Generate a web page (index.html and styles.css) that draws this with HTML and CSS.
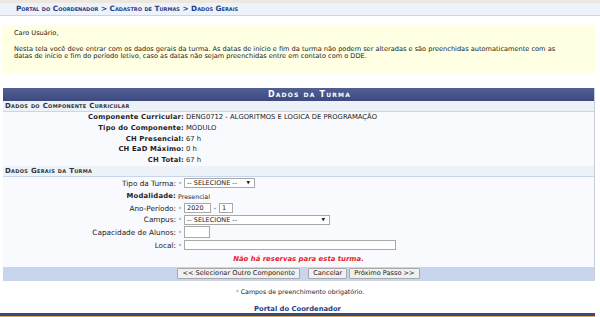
FILE: index.html
```html
<!DOCTYPE html>
<html lang="pt-BR">
<head>
  <meta charset="UTF-8">
  <title>Dados Gerais da Turma</title>
  <link rel="stylesheet" href="styles.css">
</head>
<body>

<div class="breadcrumb">Portal do Coordenador &gt; Cadastro de Turmas &gt; Dados Gerais</div>

<div class="info">
  <p>Caro Usuário,</p>
  <p>Nesta tela você deve entrar com os dados gerais da turma. As datas de início e fim da turma não podem ser alteradas e são preenchidas automaticamente com as datas de início e fim do período letivo, caso as datas não sejam preenchidas entre em contato com o DDE.</p>
</div>

<div class="formulario">
  <div class="caption">Dados da Turma</div>

  <div class="subtitle">Dados do Componente Curricular</div>
  <div class="rows">
    <div class="row"><span class="label bold">Componente Curricular:</span><span class="value">DENG0712 - ALGORITMOS E LOGICA DE PROGRAMAÇÃO</span></div>
    <div class="row"><span class="label bold">Tipo do Componente:</span><span class="value">MÓDULO</span></div>
    <div class="row"><span class="label bold">CH Presencial:</span><span class="value">67 h</span></div>
    <div class="row"><span class="label bold">CH EaD Máximo:</span><span class="value">0 h</span></div>
    <div class="row"><span class="label bold">CH Total:</span><span class="value">67 h</span></div>
  </div>

  <div class="subtitle">Dados Gerais da Turma</div>
  <div class="fields">
    <div class="field h13">
      <span class="label">Tipo da Turma:</span><span class="star">*</span>
      <span class="select w-tipo">-- SELECIONE --<i class="arrow">▼</i></span>
    </div>
    <div class="field h13">
      <span class="label bold">Modalidade:</span><span class="value">Presencial</span>
    </div>
    <div class="field h11">
      <span class="label">Ano-Período:</span><span class="star">*</span>
      <span class="input w-ano">2020</span><span class="dash">-</span><span class="input w-per">1</span>
    </div>
    <div class="field h12">
      <span class="label">Campus:</span><span class="star">*</span>
      <span class="select w-campus">-- SELECIONE --<i class="arrow">▼</i></span>
    </div>
    <div class="field h13">
      <span class="label">Capacidade de Alunos:</span><span class="star">*</span>
      <span class="input w-cap"></span>
    </div>
    <div class="field h13">
      <span class="label">Local:</span><span class="star">*</span>
      <span class="input w-local"></span>
    </div>
    <div class="alert">Não há reservas para esta turma.</div>
  </div>

  <div class="actions">
    <button>&lt;&lt; Selecionar Outro Componente</button>
    <button class="spaced">Cancelar</button>
    <button>Próximo Passo &gt;&gt;</button>
  </div>
</div>

<p class="obrigatorio"><span class="star">*</span> Campos de preenchimento obrigatório.</p>

<div class="rodape">Portal do Coordenador</div>

</body>
</html>
```

FILE: styles.css
```css
body {
  margin: 0;
  font-family: "DejaVu Sans", Verdana, sans-serif;
  font-size: 6.6px;
  color: #222;
  background-color: #fff;
  width: 600px;
  height: 317px;
  overflow: hidden;
  display: flex;
  flex-direction: column;
}

.breadcrumb {
  border-top: 3px solid #ece8df;
  background-color: #eef2fa;
  border-bottom: 1px solid #c8d5ec;
  height: 12px;
  line-height: 12px;
  padding-left: 16px;
  font-size: 7.3px;
  font-weight: bold;
  font-variant: small-caps;
  color: #1e3e86;
}

.info {
  margin: 9px 5px 0 2px;
  background-color: #ffffe3;
  height: 48px;
  padding: 5px 25px 0 12px;
  box-sizing: border-box;
}

.info p {
  margin: 0 0 8px;
  line-height: 7.7px;
}

.formulario {
  margin: 15px 5px 0 3px;
  border-right: 1px solid #c8ccd6;
  background-color: #f9fafd;
}

.caption {
  height: 13px;
  line-height: 13px;
  text-align: center;
  padding-left: 22px;
  background: linear-gradient(#525f92, #3d4a80);
  color: #fff;
  font-weight: bold;
  font-variant: small-caps;
  font-size: 8px;
  letter-spacing: 1.2px;
}

.subtitle {
  height: 10px;
  line-height: 10px;
  padding-left: 2px;
  background-color: #edf1f8;
  border-bottom: 1px solid #c8d5ec;
  color: #333;
  font-weight: bold;
  font-variant: small-caps;
  font-size: 7px;
  letter-spacing: 0.3px;
}

.row {
  display: flex;
  height: 10.8px;
  line-height: 10.8px;
  font-size: 6.8px;
}

.label {
  width: 181px;
  text-align: right;
  flex-shrink: 0;
}

.bold {
  font-weight: bold;
  letter-spacing: 0.2px;
}

.value {
  padding-left: 2px;
}

.fields {
  padding-bottom: 1px;
}

.field {
  display: flex;
  align-items: center;
}

.h11 { height: 11px; }
.h12 { height: 12px; }
.h13 { height: 13px; }

.field .label {
  width: 173px;
  font-size: 7.3px;
}

.field .label.bold {
  font-size: 6.8px;
}

.field .value {
  padding-left: 2px;
  font-size: 6.3px;
}

.star {
  color: #5a8ad8;
  font-size: 6px;
  width: 8px;
  text-align: center;
}

.select, .input {
  display: inline-block;
  box-sizing: border-box;
  height: 10px;
  line-height: 8px;
  border: 1px solid #a9a9a9;
  background-color: #fff;
  padding-left: 2px;
  font-size: 6.5px;
  position: relative;
}

.arrow {
  position: absolute;
  right: 4px;
  top: 0;
  font-style: normal;
  font-size: 4.5px;
}

.w-tipo { width: 71px; }
.w-campus { width: 146px; }
.w-ano { width: 27px; }
.w-per { width: 14px; }
.w-cap { width: 26px; height: 12px; }
.w-local { width: 212px; }

.dash {
  width: 8px;
  text-align: center;
}

.alert {
  text-align: center;
  color: #e8202a;
  font-weight: bold;
  font-style: italic;
  font-size: 6.9px;
  height: 14px;
  line-height: 14px;
}

.actions {
  background-color: #c8d5ec;
  height: 14px;
  display: flex;
  justify-content: center;
  align-items: center;
  gap: 2px;
}

.actions button {
  font-family: "DejaVu Sans", Verdana, sans-serif;
  font-size: 6.6px;
  height: 11px;
  line-height: 9px;
  padding: 0 4px;
  border: 1px solid #a8a8a8;
  border-radius: 1px;
  background-color: #f0f0f0;
  color: #222;
}

.actions .spaced {
  margin-left: 6px;
}

.obrigatorio {
  margin: 7px 0 0;
  text-align: center;
  line-height: 8px;
  font-size: 6.3px;
}

.obrigatorio .star {
  width: auto;
}

.rodape {
  margin: auto 5px 0 0;
  text-align: center;
  font-weight: bold;
  color: #1e3e86;
  font-size: 6.8px;
  line-height: 8px;
  border-bottom: 4px solid #3a4a7c;
  position: relative;
}

.rodape::after {
  content: "";
  position: absolute;
  left: 0;
  right: 0;
  bottom: -4px;
  height: 1px;
  background-color: #e0a850;
}
```
